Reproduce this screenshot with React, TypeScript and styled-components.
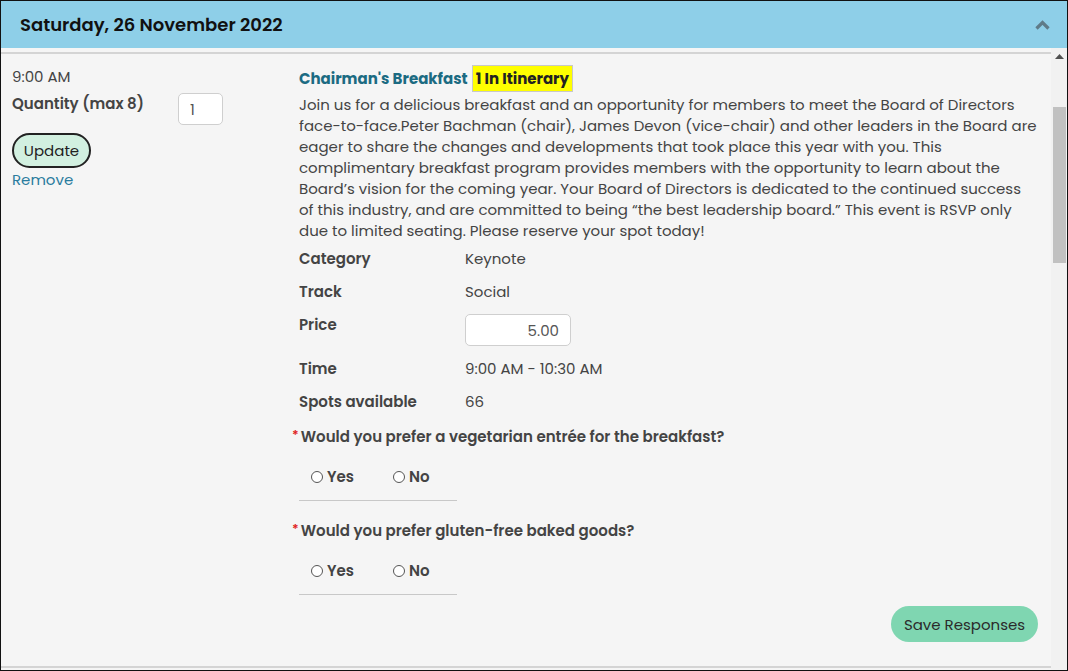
import styled, { createGlobalStyle } from "styled-components";

const GlobalStyle = createGlobalStyle`
  html, body {
    margin: 0;
    padding: 0;
    background: #ffffff;
  }
  body {
    font-family: "Poppins", "Open Sans", "Liberation Sans", sans-serif;
    color: #444444;
  }
  * {
    box-sizing: border-box;
  }
`;

const Window = styled.div`
  width: 1068px;
  height: 671px;
  border: 1px solid #111111;
  background: #f5f5f5;
  display: flex;
  flex-direction: column;
  overflow: hidden;
`;

const Header = styled.div`
  height: 47px;
  flex-shrink: 0;
  background: #8ecfe8;
  display: flex;
  align-items: center;
  justify-content: space-between;
  padding: 0 17px 0 19px;
`;

const DayTitle = styled.h2`
  margin: 0;
  font-size: 18px;
  font-weight: 600;
  color: #111111;
`;

const Body = styled.div`
  flex: 1;
  display: flex;
  min-height: 0;
`;

const Content = styled.div`
  flex: 1;
  padding: 4px 0 2px;
  display: flex;
  flex-direction: column;
`;

const Panel = styled.div`
  flex: 1;
  border-top: 2px solid #d4d4d4;
  border-bottom: 2px solid #d4d4d4;
  display: flex;
  padding: 11px 13px 0 11px;
`;

const SideColumn = styled.div`
  width: 287px;
  flex-shrink: 0;
  display: flex;
  flex-direction: column;
  align-items: flex-start;
  padding-top: 1px;
`;

const SmallText = styled.div`
  font-size: 15px;
  line-height: 21px;
  color: #444444;
`;

const QuantityRow = styled.div`
  display: flex;
  align-items: flex-start;
  margin-top: 6px;
`;

const QuantityLabel = styled.div`
  width: 166px;
  font-size: 15px;
  font-weight: 600;
  line-height: 21px;
  color: #444444;
`;

const Field = styled.input<{ $width: number; $height: number; $align?: string }>`
  width: ${(p) => p.$width}px;
  height: ${(p) => p.$height}px;
  border: 1px solid #cfcfcf;
  border-radius: 5px;
  background: #ffffff;
  font-family: inherit;
  font-size: 15px;
  color: #555555;
  text-align: ${(p) => p.$align || "left"};
  padding: 0 11px;
  outline: none;
`;

const UpdateButton = styled.button`
  margin-top: 8px;
  width: 79px;
  height: 35px;
  border: 2px solid #222222;
  border-radius: 18px;
  background: #d2f0e0;
  font-family: inherit;
  font-size: 15px;
  color: #222222;
  padding: 0;
`;

const RemoveLink = styled.a`
  margin-top: 1px;
  font-size: 15px;
  line-height: 21px;
  color: #2a7c9e;
  cursor: pointer;
`;

const MainColumn = styled.div`
  flex: 1;
  display: flex;
  flex-direction: column;
`;

const TitleRow = styled.div`
  display: flex;
  align-items: center;
  gap: 4px;
`;

const SessionTitle = styled.span`
  font-size: 15px;
  font-weight: 700;
  color: #1c6b82;
`;

const Badge = styled.span`
  background: #ffff00;
  border: 1px solid #c8c8c8;
  height: 27px;
  padding: 0 3px;
  display: inline-flex;
  align-items: center;
  font-size: 15px;
  font-weight: 700;
  color: #222222;
`;

const Description = styled.p`
  margin: 2px 0 1px;
  font-size: 15px;
  line-height: 21px;
  color: #444444;
  white-space: nowrap;
`;

const DetailRow = styled.div`
  display: flex;
  align-items: flex-start;
  padding: 6px 0;
  font-size: 15px;
  line-height: 21px;
`;

const DetailLabel = styled.div`
  width: 166px;
  font-weight: 600;
  color: #444444;
`;

const DetailValue = styled.div`
  color: #444444;
`;

const Question = styled.div`
  margin: 8px 0 0 -7px;
  display: flex;
  align-items: flex-start;
  font-size: 15px;
  line-height: 21px;
  font-weight: 600;
  color: #444444;
`;

const Required = styled.span`
  color: #e02020;
  font-size: 13px;
  line-height: 17px;
  margin-right: 2px;
`;

const RadioGroup = styled.div`
  width: 158px;
  display: flex;
  padding: 19px 0 13px 12px;
  border-bottom: 1px solid #c8c8c8;
  margin-bottom: 11px;
`;

const RadioOption = styled.label`
  width: 82px;
  flex: none;
  display: flex;
  align-items: center;
  gap: 4px;
  font-size: 15px;
  line-height: 21px;
  font-weight: 600;
  color: #444444;
`;

const RadioCircle = styled.span`
  width: 12px;
  height: 12px;
  border: 1px solid #555555;
  border-radius: 50%;
  background: #ffffff;
`;

const SaveButton = styled.button`
  align-self: flex-end;
  margin-top: 0;
  width: 147px;
  height: 36px;
  border: none;
  border-radius: 18px;
  background: #7fd6b1;
  font-family: inherit;
  font-size: 15px;
  color: #2b2b2b;
`;

const ScrollTrack = styled.div`
  width: 16px;
  flex-shrink: 0;
  background: #f1f1f1;
  display: flex;
  flex-direction: column;
  align-items: center;
`;

const ScrollArrow = styled.div`
  height: 17px;
  display: flex;
  align-items: center;
  justify-content: center;
`;

const ScrollThumb = styled.div`
  width: 13px;
  height: 156px;
  margin-top: 42px;
  background: #c1c1c1;
`;

const Chevron = () => (
  <svg width="15" height="11" viewBox="0 0 15 11">
    <path d="M1.5 9.5 L7.5 3.5 L13.5 9.5" fill="none" stroke="#5f7b88" strokeWidth="3.2" />
  </svg>
);

const lines = [
  "Join us for a delicious breakfast and an opportunity for members to meet the Board of Directors",
  "face-to-face.Peter Bachman (chair), James Devon (vice-chair) and other leaders in the Board are",
  "eager to share the changes and developments that took place this year with you. This",
  "complimentary breakfast program provides members with the opportunity to learn about the",
  "Board’s vision for the coming year. Your Board of Directors is dedicated to the continued success",
  "of this industry, and are committed to being “the best leadership board.” This event is RSVP only",
  "due to limited seating. Please reserve your spot today!",
];

const questions = [
  "Would you prefer a vegetarian entrée for the breakfast?",
  "Would you prefer gluten-free baked goods?",
];

export default function App() {
  return (
    <>
      <GlobalStyle />
      <Window>
        <Header>
          <DayTitle>Saturday, 26 November 2022</DayTitle>
          <Chevron />
        </Header>
        <Body>
          <Content>
            <Panel>
              <SideColumn>
                <SmallText>9:00 AM</SmallText>
                <QuantityRow>
                  <QuantityLabel>Quantity (max 8)</QuantityLabel>
                  <Field $width={45} $height={32} defaultValue="1" />
                </QuantityRow>
                <UpdateButton>Update</UpdateButton>
                <RemoveLink>Remove</RemoveLink>
              </SideColumn>
              <MainColumn>
                <TitleRow>
                  <SessionTitle>Chairman's Breakfast</SessionTitle>
                  <Badge>1 In Itinerary</Badge>
                </TitleRow>
                <Description>
                  {lines.map((l, i) => (
                    <span key={i}>
                      {l}
                      {i < lines.length - 1 && <br />}
                    </span>
                  ))}
                </Description>
                <DetailRow>
                  <DetailLabel>Category</DetailLabel>
                  <DetailValue>Keynote</DetailValue>
                </DetailRow>
                <DetailRow>
                  <DetailLabel>Track</DetailLabel>
                  <DetailValue>Social</DetailValue>
                </DetailRow>
                <DetailRow>
                  <DetailLabel>Price</DetailLabel>
                  <Field $width={106} $height={32} $align="right" defaultValue="5.00" />
                </DetailRow>
                <DetailRow>
                  <DetailLabel>Time</DetailLabel>
                  <DetailValue>9:00 AM - 10:30 AM</DetailValue>
                </DetailRow>
                <DetailRow>
                  <DetailLabel>Spots available</DetailLabel>
                  <DetailValue>66</DetailValue>
                </DetailRow>
                {questions.map((q) => (
                  <div key={q}>
                    <Question>
                      <Required>*</Required>
                      {q}
                    </Question>
                    <RadioGroup>
                      <RadioOption>
                        <RadioCircle />
                        Yes
                      </RadioOption>
                      <RadioOption>
                        <RadioCircle />
                        No
                      </RadioOption>
                    </RadioGroup>
                  </div>
                ))}
                <SaveButton>Save Responses</SaveButton>
              </MainColumn>
            </Panel>
          </Content>
          <ScrollTrack>
            <ScrollArrow>
              <svg width="9" height="5" viewBox="0 0 9 5">
                <path d="M0 5 L4.5 0 L9 5 Z" fill="#505050" />
              </svg>
            </ScrollArrow>
            <ScrollThumb />
          </ScrollTrack>
        </Body>
      </Window>
    </>
  );
}
